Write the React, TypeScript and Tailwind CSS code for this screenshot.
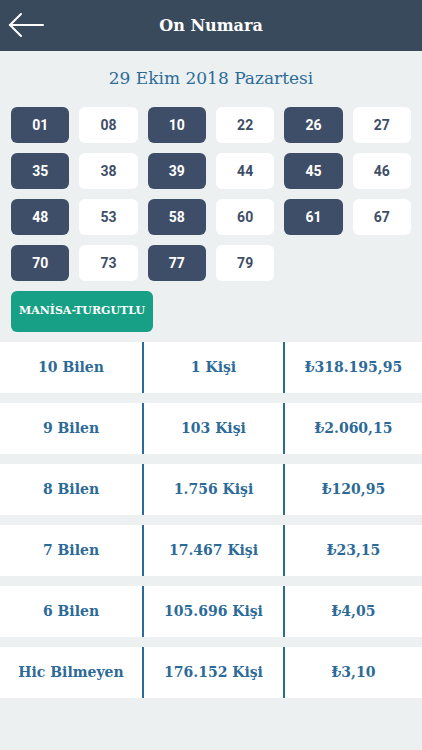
const numbers: { n: string; hit: boolean }[] = [
  { n: '01', hit: true },
  { n: '08', hit: false },
  { n: '10', hit: true },
  { n: '22', hit: false },
  { n: '26', hit: true },
  { n: '27', hit: false },
  { n: '35', hit: true },
  { n: '38', hit: false },
  { n: '39', hit: true },
  { n: '44', hit: false },
  { n: '45', hit: true },
  { n: '46', hit: false },
  { n: '48', hit: true },
  { n: '53', hit: false },
  { n: '58', hit: true },
  { n: '60', hit: false },
  { n: '61', hit: true },
  { n: '67', hit: false },
  { n: '70', hit: true },
  { n: '73', hit: false },
  { n: '77', hit: true },
  { n: '79', hit: false },
];

const results = [
  ['10 Bilen', '1 Kişi', '₺318.195,95'],
  ['9 Bilen', '103 Kişi', '₺2.060,15'],
  ['8 Bilen', '1.756 Kişi', '₺120,95'],
  ['7 Bilen', '17.467 Kişi', '₺23,15'],
  ['6 Bilen', '105.696 Kişi', '₺4,05'],
  ['Hic Bilmeyen', '176.152 Kişi', '₺3,10'],
];

const slab = { fontFamily: '"DejaVu Serif", "Liberation Serif", serif' };

export default function App() {
  return (
    <div className="min-h-[750px] w-[422px] bg-[#ecf0f1]" style={slab}>
      {/* top bar */}
      <header className="relative flex h-[51px] items-center justify-center bg-[#3a4a5d]">
        <button className="absolute left-[8px] top-[12px] h-[26px] w-[36px]">
          <svg viewBox="0 0 36 26" className="h-[26px] w-[36px]" fill="none" stroke="#ffffff" strokeWidth="2" strokeLinecap="round">
            <path d="M2 13h33" />
            <path d="M13 2L2 13l11 11" />
          </svg>
        </button>
        <h1 className="text-[16px] font-bold text-white">On Numara</h1>
      </header>

      <div className="flex h-[56px] items-center justify-center text-[17px] text-[#2c6c98]">
        29 Ekim 2018 Pazartesi
      </div>

      {/* drawn numbers */}
      <div className="grid grid-cols-6 gap-[10px] px-[11px]">
        {numbers.map((x) => (
          <div
            key={x.n}
            className={`flex h-[36px] items-center justify-center rounded-[6px] text-[14px] font-bold ${
              x.hit ? 'bg-[#3f4e68] text-white' : 'bg-white text-[#3f4e68]'
            }`}
            style={{ fontFamily: 'Roboto, "Liberation Sans", sans-serif' }}
          >
            {x.n}
          </div>
        ))}
      </div>

      <div className="px-[11px] pt-[10px]">
        <span className="inline-flex h-[41px] w-[142px] items-center justify-center rounded-[6px] bg-[#17a085] text-[11px] font-bold text-white">
          MANİSA-TURGUTLU
        </span>
      </div>

      {/* prize table */}
      <div className="mt-[10px] flex flex-col gap-[10px]">
        {results.map((r) => (
          <div key={r[0]} className="grid h-[51px] grid-cols-[142px_2px_139px_2px_1fr] bg-white text-[14px] font-bold text-[#2c6a98]">
            <div className="flex items-center justify-center">{r[0]}</div>
            <div className="bg-[#2c6a98]" />
            <div className="flex items-center justify-center">{r[1]}</div>
            <div className="bg-[#2c6a98]" />
            <div className="flex items-center justify-center">{r[2]}</div>
          </div>
        ))}
      </div>
    </div>
  );
}
